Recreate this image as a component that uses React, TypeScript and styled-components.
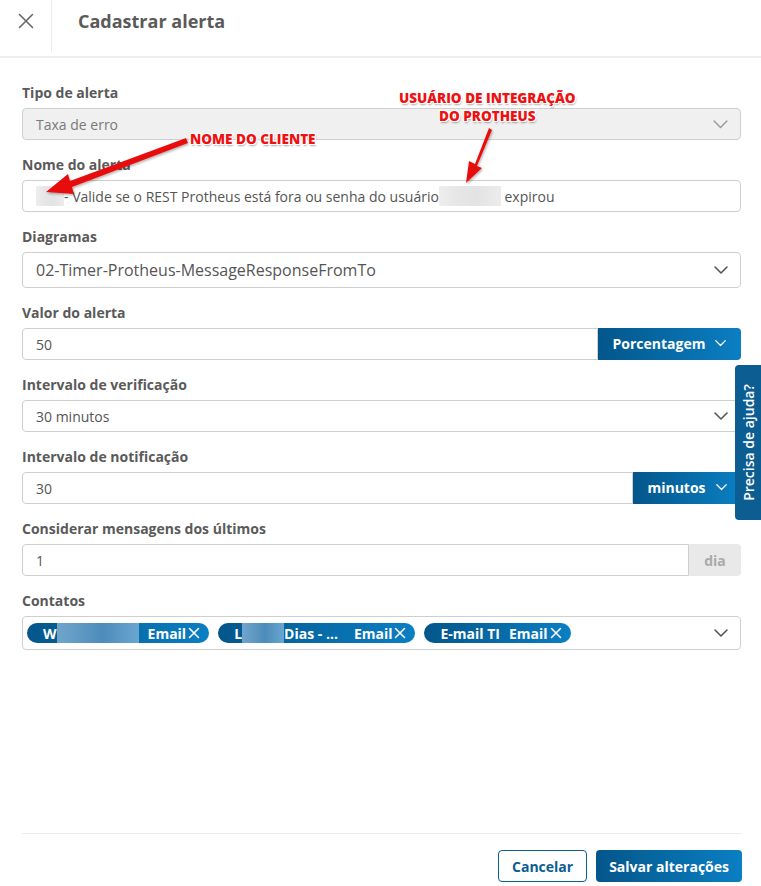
import React from "react";
import styled, { createGlobalStyle } from "styled-components";

const GlobalStyle = createGlobalStyle`
    html, body {
        margin: 0;
        padding: 0;
        background: #ffffff;
    }
    body {
        font-family: "Open Sans", "Noto Sans", sans-serif;
        color: #555555;
    }
`;

const BLUE_GRADIENT = "linear-gradient(90deg, #04568a 0%, #0a7fc3 100%)";

const Page = styled.div`
    position: relative;
    width: 761px;
    height: 886px;
    display: flex;
    flex-direction: column;
    overflow: hidden;
`;

const Header = styled.header`
    height: 56px;
    display: flex;
    align-items: stretch;
    border-bottom: 2px solid #f0f0f0;
    flex-shrink: 0;
`;

const CloseButton = styled.button`
    width: 52px;
    height: 52px;
    border: none;
    border-right: 1px solid #ececec;
    background: transparent;
    padding: 0 0 10px 0;
    display: flex;
    align-items: center;
    justify-content: center;
    cursor: pointer;
`;

const Title = styled.h1`
    margin: 0;
    padding: 0 0 0 26px;
    height: 42px;
    display: flex;
    align-items: center;
    font-size: 18px;
    font-weight: 700;
    color: #5a5a5a;
`;

const Body = styled.main`
    flex: 1;
    padding: 25px 20px 0 22px;
    display: flex;
    flex-direction: column;
    gap: 15px;
`;

const Field = styled.div`
    display: flex;
    flex-direction: column;
    gap: 5px;
`;

const Label = styled.label`
    height: 20px;
    line-height: 20px;
    font-size: 14px;
    font-weight: 700;
    color: #5a5a5a;
`;

const Control = styled.div<{ $height?: number; $disabled?: boolean; $fontSize?: number; $padLeft?: number }>`
    height: ${p => p.$height ?? 32}px;
    box-sizing: border-box;
    border: 1px solid #cfcfcf;
    border-radius: 4px;
    background: ${p => (p.$disabled ? "#f0f0f0" : "#ffffff")};
    color: ${p => (p.$disabled ? "#7a7a7a" : "#555555")};
    font-size: ${p => p.$fontSize ?? 14}px;
    display: flex;
    align-items: center;
    padding: 0 12px 0 ${p => p.$padLeft ?? 13}px;
    flex: none;
`;

const ControlText = styled.span`
    flex: 1;
    white-space: nowrap;
    display: flex;
    align-items: center;
`;

const Group = styled.div`
    display: flex;
    align-items: stretch;
    height: 32px;

    & > ${Control} {
        flex: 1;
        min-width: 0;
        border-top-right-radius: 0;
        border-bottom-right-radius: 0;
    }
`;

const AddonButton = styled.button<{ $width: number }>`
    width: ${p => p.$width}px;
    border: none;
    border-radius: 0 4px 4px 0;
    background: ${BLUE_GRADIENT};
    color: #ffffff;
    font-family: inherit;
    font-size: 14px;
    font-weight: 700;
    display: flex;
    align-items: center;
    justify-content: center;
    gap: 10px;
    padding: 0 0 1px 0;
    flex-shrink: 0;
`;

const AddonText = styled.span<{ $width: number }>`
    width: ${p => p.$width}px;
    border-radius: 0 4px 4px 0;
    background: #e9e9ea;
    color: #a9a9a9;
    font-size: 14px;
    font-weight: 700;
    display: flex;
    align-items: center;
    justify-content: center;
    flex-shrink: 0;
`;

const Redacted = styled.span<{ $width: number; $tone?: "gray" | "blue" }>`
    display: inline-block;
    width: ${p => p.$width}px;
    height: 20px;
    background: ${p =>
        p.$tone === "blue"
            ? "linear-gradient(90deg, #6fa5cb 0%, #5e98c2 30%, #4c8cbb 55%, #6aa6d1 100%)"
            : "linear-gradient(90deg, #eeeeee 0%, #e6e6e6 30%, #e3e3e3 60%, #ececec 100%)"};
`;

const ChipRow = styled.div`
    flex: 1;
    display: flex;
    align-items: center;
    gap: 9px;
`;

const Chip = styled.span`
    height: 20px;
    border-radius: 10px;
    background: ${BLUE_GRADIENT};
    color: #ffffff;
    font-size: 14px;
    font-weight: 700;
    display: inline-flex;
    align-items: center;
    padding: 0 9px 0 16px;
    white-space: nowrap;
`;

const ChipEmail = styled.span<{ $gap?: number }>`
    margin-left: ${p => p.$gap ?? 9}px;
    display: inline-flex;
    align-items: center;
    gap: 2px;
`;

const Footer = styled.footer`
    box-sizing: border-box;
    border-top: 1px solid #ececec;
    margin: 0 19px 0 22px;
    height: 53px;
    padding: 16px 0 0 0;
    display: flex;
    justify-content: flex-end;
    gap: 9px;
    flex-shrink: 0;
`;

const FooterButton = styled.button<{ $primary?: boolean }>`
    height: 32px;
    box-sizing: border-box;
    border-radius: 4px;
    padding: 0 13px;
    font-family: inherit;
    font-size: 14px;
    font-weight: 700;
    border: ${p => (p.$primary ? "none" : "1px solid #0a5e93")};
    background: ${p => (p.$primary ? BLUE_GRADIENT : "#ffffff")};
    color: ${p => (p.$primary ? "#ffffff" : "#0a5e93")};
`;

const HelpTab = styled.div`
    position: absolute;
    right: 0;
    top: 365px;
    width: 26px;
    height: 155px;
    border-radius: 4px 0 0 4px;
    background: #0c5d91;
    display: flex;
    align-items: center;
    justify-content: center;
`;

const HelpText = styled.span`
    transform: rotate(-90deg);
    white-space: nowrap;
    color: #ffffff;
    font-size: 14px;
    font-weight: 600;
`;

const Annotation = styled.span<{ $left: number; $top: number }>`
    position: absolute;
    left: ${p => p.$left}px;
    top: ${p => p.$top}px;
    color: #ee1111;
    font-size: 13.5px;
    font-weight: 800;
    line-height: 18px;
    text-align: center;
    white-space: nowrap;
    text-shadow: 1px 0 0 #fff, -1px 0 0 #fff, 0 1px 0 #fff, 0 -1px 0 #fff, 1px 1px 0 #fff, -1px -1px 0 #fff,
        1px -1px 0 #fff, -1px 1px 0 #fff, 1px 2px 2px rgba(0, 0, 0, 0.35);
`;

const ArrowLayer = styled.svg`
    position: absolute;
    left: 0;
    top: 0;
    pointer-events: none;
`;

function Chevron({ size = 14, color = "#555555", stroke = 1.6 }: { size?: number; color?: string; stroke?: number }) {
    return (
        <svg width={size} height={size * 0.6} viewBox="0 0 14 8.4" fill="none">
            <polyline points="1,1 7,7 13,1" stroke={color} strokeWidth={stroke} strokeLinecap="round" strokeLinejoin="round" />
        </svg>
    );
}

function SmallX({ size = 12 }: { size?: number }) {
    return (
        <svg width={size} height={size} viewBox="0 0 12 12" fill="none">
            <path d="M1.5 1.5 L10.5 10.5 M10.5 1.5 L1.5 10.5" stroke="#ffffff" strokeWidth={1.6} strokeLinecap="round" />
        </svg>
    );
}

function Arrows() {
    return (
        <ArrowLayer width={761} height={886}>
            <defs>
                <filter id="shadow" x="-20%" y="-20%" width="140%" height="140%">
                    <feDropShadow dx="1" dy="1.5" stdDeviation="1" floodColor="#000" floodOpacity="0.3" />
                </filter>
            </defs>
            <g filter="url(#shadow)" fill="#e81010">
                <path d="M186 138 L70 181 L68 174 L46 192 L74 194 L72 187 L188 143 Z" />
                <path d="M489 128 L475 164 L469 161 L466 183 L482 168 L477 166 L492 130 Z" />
            </g>
        </ArrowLayer>
    );
}

export default function App() {
    return (
        <>
            <GlobalStyle />
            <Page>
                <Header>
                    <CloseButton aria-label="Fechar">
                        <svg width={16} height={16} viewBox="0 0 16 16" fill="none">
                            <path d="M1.5 1.5 L14.5 14.5 M14.5 1.5 L1.5 14.5" stroke="#666666" strokeWidth={1.6} strokeLinecap="round" />
                        </svg>
                    </CloseButton>
                    <Title>Cadastrar alerta</Title>
                </Header>

                <Body>
                    <Field>
                        <Label>Tipo de alerta</Label>
                        <Control $disabled>
                            <ControlText>Taxa de erro</ControlText>
                            <Chevron color="#999999" size={15} stroke={1.3} />
                        </Control>
                    </Field>

                    <Field>
                        <Label>Nome do alerta</Label>
                        <Control>
                            <ControlText>
                                <Redacted $width={28} />
                                - Valide se o REST Protheus está fora ou senha do usuário
                                <Redacted $width={62} />
                                &nbsp;expirou
                            </ControlText>
                        </Control>
                    </Field>

                    <Field>
                        <Label>Diagramas</Label>
                        <Control $height={36} $fontSize={16}>
                            <ControlText>02-Timer-Protheus-MessageResponseFromTo</ControlText>
                            <Chevron />
                        </Control>
                    </Field>

                    <Field>
                        <Label>Valor do alerta</Label>
                        <Group>
                            <Control>
                                <ControlText>50</ControlText>
                            </Control>
                            <AddonButton $width={143}>
                                Porcentagem
                                <Chevron color="#ffffff" size={11} stroke={1.6} />
                            </AddonButton>
                        </Group>
                    </Field>

                    <Field>
                        <Label>Intervalo de verificação</Label>
                        <Control>
                            <ControlText>30 minutos</ControlText>
                            <Chevron />
                        </Control>
                    </Field>

                    <Field>
                        <Label>Intervalo de notificação</Label>
                        <Group>
                            <Control>
                                <ControlText>30</ControlText>
                            </Control>
                            <AddonButton $width={108}>
                                minutos
                                <Chevron color="#ffffff" size={11} stroke={1.6} />
                            </AddonButton>
                        </Group>
                    </Field>

                    <Field>
                        <Label>Considerar mensagens dos últimos</Label>
                        <Group>
                            <Control>
                                <ControlText>1</ControlText>
                            </Control>
                            <AddonText $width={52}>dia</AddonText>
                        </Group>
                    </Field>

                    <Field>
                        <Label>Contatos</Label>
                        <Control $height={34} $padLeft={4}>
                            <ChipRow>
                                <Chip>
                                    W<Redacted $width={82} $tone="blue" />
                                    <ChipEmail>Email<SmallX /></ChipEmail>
                                </Chip>
                                <Chip>
                                    L<Redacted $width={42} $tone="blue" />
                                    Dias - ...
                                    <ChipEmail $gap={16}>Email<SmallX /></ChipEmail>
                                </Chip>
                                <Chip>
                                    E-mail TI
                                    <ChipEmail>Email<SmallX /></ChipEmail>
                                </Chip>
                            </ChipRow>
                            <Chevron />
                        </Control>
                    </Field>
                </Body>

                <Footer>
                    <FooterButton>Cancelar</FooterButton>
                    <FooterButton $primary>Salvar alterações</FooterButton>
                </Footer>

                <HelpTab>
                    <HelpText>Precisa de ajuda?</HelpText>
                </HelpTab>

                <Arrows />
                <Annotation $left={190} $top={130}>NOME DO CLIENTE</Annotation>
                <Annotation $left={399} $top={89}>
                    USUÁRIO DE INTEGRAÇÃO
                    <br />
                    DO PROTHEUS
                </Annotation>
            </Page>
        </>
    );
}
